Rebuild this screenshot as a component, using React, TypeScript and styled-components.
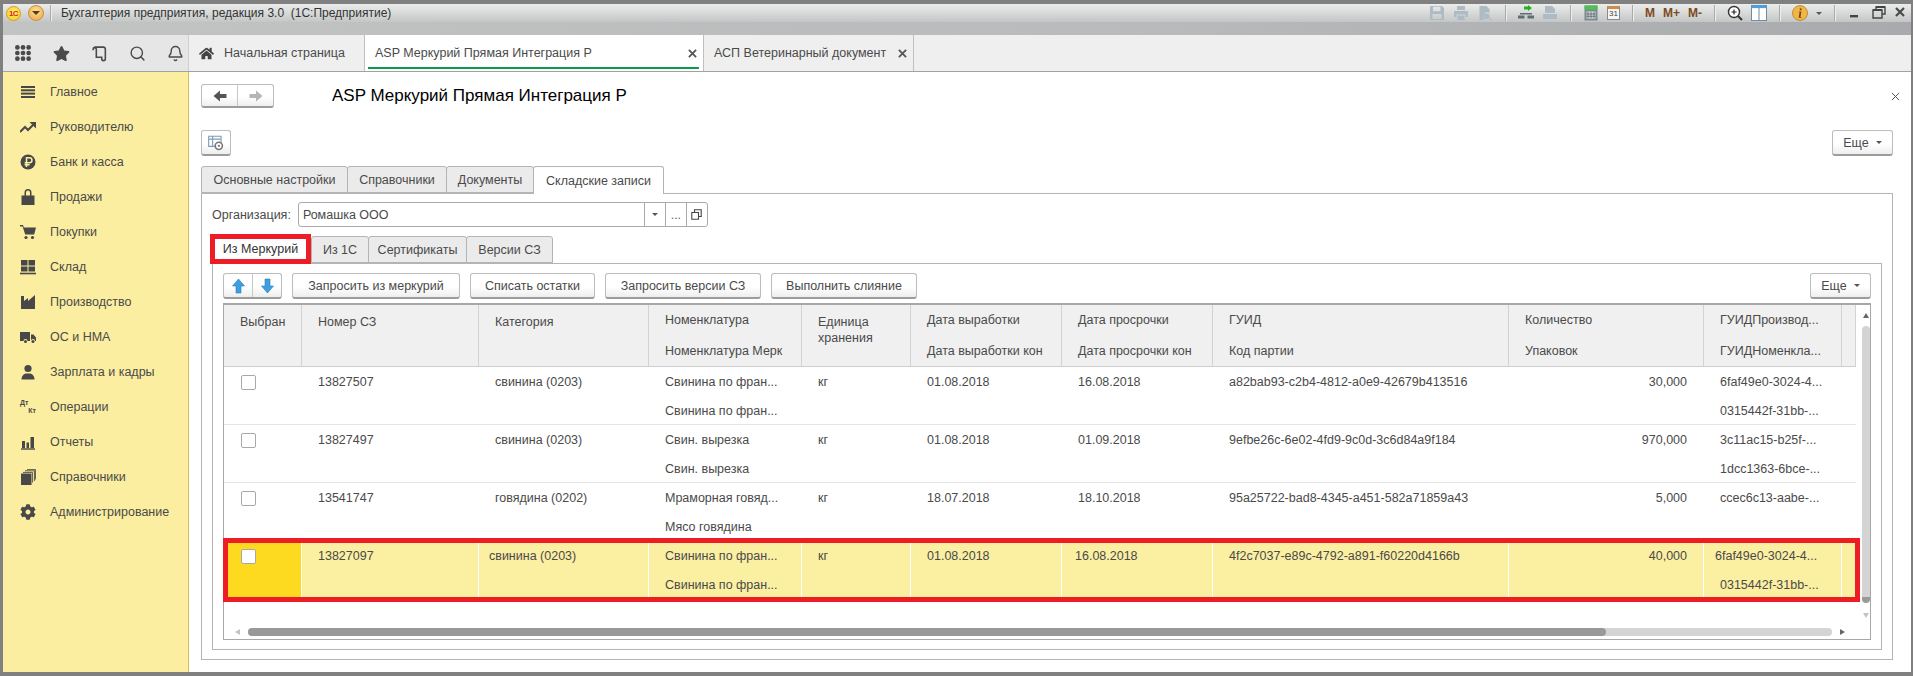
import React from 'react';
import styled, { createGlobalStyle } from 'styled-components';
import { FaCog, FaHome, FaStar } from 'react-icons/fa';
import { Bell, Search } from 'lucide-react';

const Global = createGlobalStyle`
  html, body { margin: 0; padding: 0; background: #fff; overflow: hidden; }
  body { font-family: "Liberation Sans", Arial, sans-serif; font-size: 12.5px; color: #4a4a4a; }
  * { box-sizing: border-box; }
`;

const columnTemplate = '78px 177px 170px 153px 109px 151px 151px 296px 195px 138px 14px';

const headers: [string, string?][] = [
  ['Выбран'],
  ['Номер СЗ'],
  ['Категория'],
  ['Номенклатура', 'Номенклатура Мерк'],
  ['Единица хранения'],
  ['Дата выработки', 'Дата выработки кон'],
  ['Дата просрочки', 'Дата просрочки кон'],
  ['ГУИД', 'Код партии'],
  ['Количество', 'Упаковок'],
  ['ГУИДПроизвод...', 'ГУИДНоменкла...'],
  ['', ''],
];

const rows = [
  {
    num: '13827507', cat: 'свинина (0203)', nom: ['Свинина по фран...', 'Свинина по фран...'],
    d1: '01.08.2018', d2: '16.08.2018', guid: 'a82bab93-c2b4-4812-a0e9-42679b413516', qty: '30,000',
    ext: ['6faf49e0-3024-4...', '0315442f-31bb-...'],
  },
  {
    num: '13827497', cat: 'свинина (0203)', nom: ['Свин. вырезка', 'Свин. вырезка'],
    d1: '01.08.2018', d2: '01.09.2018', guid: '9efbe26c-6e02-4fd9-9c0d-3c6d84a9f184', qty: '970,000',
    ext: ['3c11ac15-b25f-...', '1dcc1363-6bce-...'],
  },
  {
    num: '13541747', cat: 'говядина (0202)', nom: ['Мраморная говяд...', 'Мясо говядина'],
    d1: '18.07.2018', d2: '18.10.2018', guid: '95a25722-bad8-4345-a451-582a71859a43', qty: '5,000',
    ext: ['ccec6c13-aabe-...', ''],
  },
  {
    num: '13827097', cat: 'свинина (0203)', nom: ['Свинина по фран...', 'Свинина по фран...'],
    d1: '01.08.2018', d2: '16.08.2018', guid: '4f2c7037-e89c-4792-a891-f60220d4166b', qty: '40,000',
    ext: ['6faf49e0-3024-4...', '0315442f-31bb-...'],
  },
];

const Frame = styled.div`
  width: 1913px;
  height: 676px;
  display: flex;
  flex-direction: column;
  border-style: solid;
  border-color: #808080;
  border-width: 4px 2px 4px 3px;
  overflow: hidden;
`;

const TitleBar = styled.div`
  height: 18px;
  flex: none;
  display: flex;
  align-items: center;
  background: linear-gradient(#ebecec, #c4c6c6);
  padding-left: 3px;
`;

const Strip = styled.div`
  height: 13px;
  flex: none;
  background: linear-gradient(90deg, #c2c3c3, #b9babb 60%, #a9aaad);
`;

const Logo = styled.span`
  width: 15px;
  height: 15px;
  border-radius: 50%;
  background: radial-gradient(circle at 50% 40%, #fff27a, #f5c815);
  border: 1px solid #d8a010;
  color: #d8261c;
  font-size: 8px;
  font-weight: bold;
  display: flex;
  align-items: center;
  justify-content: center;
  letter-spacing: -0.5px;
`;

const MenuOrb = styled.span`
  width: 16px;
  height: 16px;
  margin-left: 7px;
  border-radius: 50%;
  background: radial-gradient(circle at 50% 35%, #fbe0a0, #eda43c);
  border: 1px solid #c9913f;
  display: flex;
  align-items: center;
  justify-content: center;
  &::after {
    content: '';
    border-style: solid;
    border-width: 4px 4px 0;
    border-color: #5c3b10 transparent transparent;
  }
`;

const TitleSep = styled.span`
  width: 1px;
  height: 16px;
  background: #a9aaaa;
  box-shadow: 1px 0 0 #eee;
  margin: 0 ${(p: { $tight?: boolean }) => (p.$tight ? '4px' : '10px')} 0 ${(p: { $tight?: boolean }) => (p.$tight ? '4px' : '6px')};
`;

const AppTitle = styled.span`
  font-size: 12px;
  color: #333;
  white-space: pre;
`;

const ToolStrip = styled.div`
  margin-left: auto;
  display: flex;
  align-items: center;
  gap: 8px;
  padding-right: 6px;
`;

const BrownMark = styled.span`
  color: #7d4a1e;
  font-size: 12px;
  font-weight: bold;
  min-width: 10px;
  white-space: nowrap;
`;

const DayMark = styled.span`
  width: 13px;
  height: 14px;
  border: 1px solid #8a8a8a;
  border-top: 3px solid #d08a4a;
  background: #f6f6f6;
  font-size: 8px;
  line-height: 10px;
  color: #444;
  text-align: center;
`;

const Caret = styled.span`
  border-style: solid;
  border-width: 3px 3px 0;
  border-color: #555 transparent transparent;
`;

const NavRow = styled.div`
  height: 37px;
  flex: none;
  display: flex;
  background: #efefef;
  border-bottom: 1px solid #a2a2a2;
`;

const QuickIcons = styled.div`
  width: 186px;
  flex: none;
  display: flex;
  align-items: center;
  gap: 21px;
  padding-left: 11px;
  background: #e6e6e6;
  color: #4a4a4a;
  border-right: 1px solid #cfcfcf;
`;

const NavTab = styled.div<{ $active?: boolean; $width: number }>`
  width: ${p => p.$width}px;
  display: flex;
  align-items: center;
  position: relative;
  padding-left: 10px;
  font-size: 12.5px;
  color: #4a4a4a;
  background: ${p => (p.$active ? '#fff' : '#efefef')};
  border-right: 1px solid #c0c0c0;
  ${p => p.$active && `box-shadow: inset 0 -4px 0 #fff;`}
`;

const GreenLine = styled.span`
  position: absolute;
  left: 3px;
  right: 4px;
  bottom: 2px;
  height: 2px;
  background: #0d9a4d;
`;

const TabClose = styled.span`
  margin-left: auto;
  margin-right: 6px;
  display: flex;
  color: #555;
`;

const HomeMark = styled.span`
  display: flex;
  margin-right: 10px;
  color: #444;
`;

const Body = styled.div`
  flex: 1;
  min-height: 0;
  display: flex;
`;

const Sidebar = styled.nav`
  width: 186px;
  flex: none;
  background: #fbeea0;
  border-right: 1px solid #d6bd55;
  padding-top: 2px;
`;

const SideItem = styled.div`
  height: 35px;
  display: flex;
  align-items: center;
  padding-left: 17px;
  gap: 14px;
  font-size: 12.5px;
  color: #4a4a4a;
`;

const SideIcon = styled.span`
  width: 16px;
  height: 16px;
  flex: none;
  display: flex;
  color: #484848;
`;

const DebitCredit = styled.span`
  width: 16px;
  height: 16px;
  flex: none;
  display: flex;
  flex-direction: column;
  font-size: 7px;
  line-height: 8px;
  font-weight: bold;
  color: #484848;
  & > span:last-child { align-self: flex-end; }
`;

const Main = styled.main`
  flex: 1;
  min-width: 0;
  background: #fff;
  padding: 12px 18px 12px 12px;
  display: flex;
  flex-direction: column;
`;

const HeadRow = styled.div`
  height: 24px;
  flex: none;
  display: flex;
  align-items: center;
`;

const PageTitle = styled.h1`
  margin: 0 0 0 58px;
  font-size: 17px;
  font-weight: normal;
  color: #000;
`;

const CloseForm = styled.span`
  margin-left: auto;
  margin-right: -7px;
  display: flex;
  color: #555;
`;

const BarRow = styled.div`
  height: 26px;
  margin-top: 22px;
  flex: none;
  display: flex;
  justify-content: space-between;
`;

const Btn = styled.div<{ $width?: number }>`
  width: ${p => (p.$width ? `${p.$width}px` : 'auto')};
  height: 100%;
  display: flex;
  align-items: center;
  justify-content: center;
  gap: 7px;
  background: linear-gradient(#fff 55%, #eeeeee);
  border: 1px solid #bcbcbc;
  border-bottom: 2px solid #9c9c9c;
  border-radius: 3px;
  font-size: 12.5px;
  color: #4a4a4a;
`;

const BtnPair = styled(Btn)`
  justify-content: flex-start;
  gap: 0;
  & > span {
    flex: 1;
    height: 100%;
    display: flex;
    align-items: center;
    justify-content: center;
  }
  & > span + span { border-left: 1px solid #c8c8c8; }
`;

const TabStrip = styled.div`
  flex: none;
  height: 27px;
  margin-top: 10px;
  display: flex;
  position: relative;
  z-index: 1;
`;

const Tab = styled.div<{ $active?: boolean; $width: number }>`
  width: ${p => p.$width}px;
  height: ${p => (p.$active ? '28px' : '27px')};
  display: flex;
  align-items: center;
  justify-content: center;
  font-size: 12.5px;
  color: #4a4a4a;
  background: ${p => (p.$active ? '#fff' : '#ebebeb')};
  border: 1px solid #b4b4b4;
  border-left-width: ${p => (p.$active ? '1px' : '1px')};
  border-bottom: ${p => (p.$active ? 'none' : '1px solid #b4b4b4')};
  border-radius: 3px 3px 0 0;
  margin-right: -1px;
`;

const OuterPanel = styled.section`
  flex: 1;
  min-height: 0;
  border: 1px solid #b4b4b4;
  display: flex;
  flex-direction: column;
  padding: 8px 10px 9px 10px;
`;

const OrgRow = styled.div`
  height: 25px;
  flex: none;
  display: flex;
  align-items: center;
  gap: 7px;
  font-size: 12.5px;
`;

const OrgField = styled.div`
  height: 100%;
  width: 410px;
  display: flex;
  border: 1px solid #aaaaaa;
  border-radius: 3px;
`;

const OrgValue = styled.span`
  flex: 1;
  padding-left: 4px;
  display: flex;
  align-items: center;
`;

const OrgBtn = styled.span`
  width: 21px;
  display: flex;
  align-items: center;
  justify-content: center;
  border-left: 1px solid #aaaaaa;
  color: #666;
`;

const SubStrip = styled.div`
  flex: none;
  height: 30px;
  margin: 7px 0 0 -2px;
  display: flex;
  align-items: flex-end;
  position: relative;
  z-index: 1;
`;

const SubTab = styled.div<{ $width: number }>`
  width: ${p => p.$width}px;
  height: 27px;
  display: flex;
  align-items: center;
  justify-content: center;
  background: #ebebeb;
  border: 1px solid #b4b4b4;
  border-radius: 3px 3px 0 0;
  margin-right: -1px;
  margin-bottom: 1px;
  font-size: 12.5px;
`;

const MarkedTab = styled.div`
  width: 101px;
  height: 30px;
  display: flex;
  align-items: center;
  justify-content: center;
  background: #fff;
  border: 5px solid #ee1c25;
  font-size: 12.5px;
  color: #333;
`;

const InnerPanel = styled.div`
  flex: 1;
  min-height: 0;
  margin-top: -1px;
  border: 1px solid #b4b4b4;
  padding: 9px 10px 9px 10px;
  display: flex;
  flex-direction: column;
`;

const CmdRow = styled.div`
  height: 26px;
  flex: none;
  display: flex;
  gap: 10px;
`;

const Grow = styled.span`
  flex: 1;
`;

const Table = styled.div`
  flex: 1;
  min-height: 0;
  margin-top: 4px;
  position: relative;
  border: 1px solid #a8a8a8;
  border-top-width: 2px;
  display: flex;
  flex-direction: column;
`;

const Upper = styled.div`
  flex: 1;
  min-height: 0;
  display: flex;
`;

const Rows = styled.div`
  width: 1632px;
  flex: none;
`;

const GridRow = styled.div<{ $head?: boolean; $picked?: boolean }>`
  display: grid;
  grid-template-columns: ${columnTemplate};
  height: ${p => (p.$head ? '62px' : '58px')};
  border-bottom: 1px solid ${p => (p.$head ? '#cfcfcf' : p.$picked ? 'transparent' : '#e4e4e4')};
  background: ${p => (p.$head ? '#f0f0f0' : p.$picked ? '#fbefa2' : '#fff')};
`;

const Col = styled.div<{ $sep?: string; $fill?: string }>`
  display: flex;
  flex-direction: column;
  min-width: 0;
  border-right: 1px solid ${p => p.$sep || 'transparent'};
  background: ${p => p.$fill || 'transparent'};
`;

const Line = styled.div<{ $sep?: string; $right?: boolean; $nudge?: number }>`
  flex: 1;
  display: flex;
  align-items: center;
  padding: 0 16px;
  padding-left: ${p => 16 + (p.$nudge || 0)}px;
  justify-content: ${p => (p.$right ? 'flex-end' : 'flex-start')};
  white-space: nowrap;
  overflow: hidden;
  color: #4a4a4a;
  & + & { border-top: 1px solid ${p => p.$sep || 'transparent'}; }
`;

const TopLine = styled(Line)`
  flex: none;
  height: 30px;
`;

const WrapHead = styled.div`
  padding: 9px 16px 0;
  line-height: 16px;
  color: #4a4a4a;
`;

const Check = styled.span`
  width: 15px;
  height: 15px;
  margin: 8px 0 0 17px;
  border: 1px solid #a8a8a8;
  border-radius: 2px;
  background: #fff;
`;

const VScroll = styled.div`
  width: 15px;
  flex: none;
  display: flex;
  flex-direction: column;
  align-items: center;
  padding: 8px 0 0 4px;
`;

const VTrack = styled.div`
  width: 8px;
  height: 277px;
  margin-top: 8px;
  background: #d4d4d4;
  border-radius: 4px;
  border-bottom: 6px solid #999;
`;

const ScrollArrow = styled.span<{ $dir: 'up' | 'down' | 'left' | 'right'; $dim?: boolean }>`
  flex: none;
  border-style: solid;
  border-color: transparent;
  border-width: 3.5px;
  ${p => {
    const c = p.$dim ? '#c4c4c4' : '#666';
    if (p.$dir === 'up') return `border-top-width:0; border-bottom: 5px solid ${c};`;
    if (p.$dir === 'down') return `border-bottom-width:0; border-top: 5px solid ${c};`;
    if (p.$dir === 'left') return `border-left-width:0; border-right: 5px solid ${c};`;
    return `border-right-width:0; border-left: 5px solid ${c};`;
  }}
`;

const VGap = styled.span`
  height: 10px;
  flex: none;
`;

const HScroll = styled.div`
  flex: none;
  height: 8px;
  margin: 0 25px 3px 11px;
  display: flex;
  align-items: center;
  gap: 8px;
`;

const HTrack = styled.div`
  flex: 1;
  height: 8px;
  border-radius: 4px;
  background: #d4d4d4;
  display: flex;
`;

const HThumb = styled.div`
  width: 1358px;
  background: #999;
  border-radius: 4px;
`;

const RedBox = styled.div`
  position: absolute;
  left: -1px;
  top: 233px;
  width: 1637px;
  height: 64px;
  border: 5px solid #ee1c25;
  pointer-events: none;
`;

const Svg = ({ children, size = 16, color = 'currentColor' }: { children: React.ReactNode; size?: number; color?: string }) => (
  <svg width={size} height={size} viewBox="0 0 16 16" fill={color}>
    {children}
  </svg>
);

const CrossIcon = ({ size = 10, weight = 2 }: { size?: number; weight?: number }) => (
  <svg width={size} height={size} viewBox="0 0 10 10" fill="none" stroke="currentColor" strokeWidth={weight}>
    <path d="M1 1l8 8M9 1l-8 8" />
  </svg>
);

const sideIcons: Record<string, React.ReactNode> = {
  menu: (
    <Svg>
      <rect x="1" y="2" width="14" height="2" />
      <rect x="1" y="5.3" width="14" height="2" />
      <rect x="1" y="8.6" width="14" height="2" />
      <rect x="1" y="12" width="14" height="2" />
    </Svg>
  ),
  trend: (
    <Svg>
      <path d="M0 13l5-5 3 3 5-5" fill="none" stroke="currentColor" strokeWidth="2" />
      <path d="M9.5 3H16v6.5z" />
    </Svg>
  ),
  ruble: (
    <Svg>
      <circle cx="8" cy="8" r="7.5" />
      <path d="M6.5 13V3.8h3a2.4 2.4 0 010 4.9H4.6M4.6 10.8h5" fill="none" stroke="#fbeea0" strokeWidth="1.5" />
    </Svg>
  ),
  bag: (
    <Svg>
      <path d="M1.5 6.5h3V3.6a3.5 3.5 0 017 0v2.9h3V16h-13zM6 6.5h4V3.6a2 2 0 00-4 0z" fillRule="evenodd" />
    </Svg>
  ),
  cart: (
    <Svg>
      <path d="M0 1h3l.8 2.5H16l-1.8 7H5.2L2.6 2.4H0z" />
      <circle cx="6" cy="13.5" r="1.6" />
      <circle cx="12.5" cy="13.5" r="1.6" />
    </Svg>
  ),
  store: (
    <Svg>
      <rect x="1" y="1" width="6.5" height="5.5" />
      <rect x="8.5" y="1" width="6.5" height="5.5" />
      <rect x="1" y="7.5" width="6.5" height="5" />
      <rect x="8.5" y="7.5" width="6.5" height="5" />
      <rect y="13.7" width="16" height="1.6" />
    </Svg>
  ),
  factory: (
    <Svg>
      <path d="M1 15V5V2h3v5l4-3v3l7-6v14z" />
    </Svg>
  ),
  truck: (
    <Svg>
      <path d="M0 3h10v9H7.5a2 2 0 00-4 0H0zM11 5.5h2.5L16 8.5V12h-1a2 2 0 00-4 0z" />
      <circle cx="5.5" cy="12.6" r="1.5" />
      <circle cx="13" cy="12.6" r="1.5" />
    </Svg>
  ),
  user: (
    <Svg>
      <circle cx="8" cy="4.5" r="3.6" />
      <path d="M1.5 15.5c0-4 2.5-5.5 4.5-6h4c2 .5 4.5 2 4.5 6z" />
    </Svg>
  ),
  bars: (
    <Svg>
      <rect x="2" y="7" width="3" height="7" />
      <rect x="6.5" y="8.5" width="2.5" height="5.5" />
      <rect x="10.5" y="3" width="3.5" height="11" />
      <rect x="1" y="14.3" width="14" height="1.4" />
    </Svg>
  ),
  books: (
    <Svg>
      <rect x="1" y="4.5" width="10.5" height="11.5" />
      <path d="M3 3.4h9.6v10.1M5 1.8h9.6v10.1M7 .4h8.4v10" fill="none" stroke="currentColor" strokeWidth=".9" />
    </Svg>
  ),
};

const sideItems: { label: string; icon?: string }[] = [
  { label: 'Главное', icon: 'menu' },
  { label: 'Руководителю', icon: 'trend' },
  { label: 'Банк и касса', icon: 'ruble' },
  { label: 'Продажи', icon: 'bag' },
  { label: 'Покупки', icon: 'cart' },
  { label: 'Склад', icon: 'store' },
  { label: 'Производство', icon: 'factory' },
  { label: 'ОС и НМА', icon: 'truck' },
  { label: 'Зарплата и кадры', icon: 'user' },
  { label: 'Операции' },
  { label: 'Отчеты', icon: 'bars' },
  { label: 'Справочники', icon: 'books' },
  { label: 'Администрирование', icon: 'gear' },
];

const dim = '#aebbc4';

const TopTools = () => (
  <ToolStrip>
    <Svg color={dim}>
      <path d="M1 1h12l2 2v12H1zM4 1.8v4.4h7.5V1.8zM3.5 9v5h9V9z" fillRule="evenodd" />
    </Svg>
    <Svg color={dim}>
      <path d="M4 1h8v4H4zM1 6h14v6h-2.5V9.5h-9V12H1zM4.5 10.5h7V15h-7z" />
    </Svg>
    <Svg color={dim}>
      <path d="M2.5 1h7l3 3v4a4 4 0 00-5.5 5.5V15H2.5zM9.5 8.5a2.8 2.8 0 102 4.6l2.4 2.4.9-.9-2.4-2.4a2.8 2.8 0 00-2.9-3.7z" fillRule="evenodd" />
    </Svg>
    <TitleSep $tight />
    <Svg>
      <path d="M6 1.5h4V0l4 3-4 3V4.6H6z" fill="#1fb31f" />
      <path d="M2 8h12v1.5H2zM0 10.5h6.5v3H0zM9.5 10.5H16v3H9.5z" fill="#5f6d75" />
    </Svg>
    <Svg color={dim}>
      <path d="M3 1h7l3 3v4H3zM1 9h14v5H1z" />
    </Svg>
    <TitleSep $tight />
    <Svg>
      <rect x="1.5" y="0.5" width="13" height="15" fill="#7c8a8d" />
      <rect x="1.5" y="0.5" width="13" height="4" fill="#4ec24e" />
      <path d="M3.5 6.5h9v7h-9z" fill="#d9dede" />
      <path d="M5 7v6M8 7v6M11 7v6M3.5 9h9M3.5 11.3h9" stroke="#66737a" />
    </Svg>
    <DayMark>31</DayMark>
    <TitleSep $tight />
    <BrownMark>M</BrownMark>
    <BrownMark>M+</BrownMark>
    <BrownMark>M-</BrownMark>
    <TitleSep $tight />
    <Svg>
      <circle cx="7" cy="7" r="5.5" fill="#fff" stroke="#333" strokeWidth="1.4" />
      <path d="M4.4 7h5.2M7 4.4v5.2" stroke="#222" strokeWidth="1.2" />
      <path d="M11 11l4 4" stroke="#333" strokeWidth="2" />
    </Svg>
    <Svg>
      <rect x="0.5" y="0.5" width="15" height="15" fill="#fff" stroke="#6e8ca5" />
      <rect x="0.5" y="0.5" width="15" height="2.6" fill="#4f9fe0" />
      <path d="M8 3v12" stroke="#6e8ca5" />
    </Svg>
    <TitleSep $tight />
    <Svg>
      <circle cx="8" cy="8" r="7.5" fill="#f0b648" stroke="#c78c2c" />
      <path d="M8.7 3.2a1 1 0 11-.01 0zM7 6.5h2.4L8.5 12h.9v.8H6.6l1-5.5h-.8z" fill="#6e4a12" />
    </Svg>
    <Caret />
    <TitleSep $tight />
    <Svg color="#444">
      <rect x="3" y="10" width="8" height="2.4" />
    </Svg>
    <Svg>
      <path d="M5 5V2h9v7h-3M2 5h9v8H2zM2 5h9" fill="none" stroke="#444" strokeWidth="1.4" />
      <path d="M5 2h9M2 5h9" stroke="#444" strokeWidth="2" />
    </Svg>
    <span>
      <CrossIcon size={10} weight={2.2} />
    </span>
  </ToolStrip>
);

const ArrowIcon = ({ dir, color }: { dir: 'left' | 'right' | 'up' | 'down'; color: string }) => {
  const rotate = { left: 0, right: 180, up: 90, down: 270 }[dir];
  return (
    <svg width="16" height="16" viewBox="0 0 16 16" fill={color} transform={`rotate(${rotate})`}>
      <path d="M1.5 8L8 2.5V6h6.5v4H8v3.5z" />
    </svg>
  );
};

const BlockArrow = ({ down }: { down?: boolean }) => (
  <svg width="13" height="16" viewBox="0 0 13 16" fill="#3f9ee2" stroke="#2a7cb8" strokeWidth=".6" transform={down ? 'rotate(180)' : undefined}>
    <path d="M6.5 1L12.5 8H9v7H4V8H.5z" />
  </svg>
);

const App = () => (
  <>
    <Global />
    <Frame>
      <TitleBar>
        <Logo>1С</Logo>
        <MenuOrb />
        <TitleSep />
        <AppTitle>{'Бухгалтерия предприятия, редакция 3.0  (1С:Предприятие)'}</AppTitle>
        <TopTools />
      </TitleBar>
      <Strip />
      <NavRow>
        <QuickIcons>
          <Svg size={18}>
            {[3, 8, 13].map(y =>
              [3, 8, 13].map(x => <circle key={`${x}-${y}`} cx={x} cy={y} r="2.1" />),
            )}
          </Svg>
          <FaStar size={17} />
          <Svg size={17}>
            <path
              d="M3 2h8.5a2 2 0 012 2v9a1.7 1.7 0 01-3.4 0v-1.5H5V4a1.5 1.5 0 00-3 0V5"
              fill="none"
              stroke="currentColor"
              strokeWidth="1.5"
            />
          </Svg>
          <Search size={17} strokeWidth={2} />
          <Bell size={17} strokeWidth={2} />
        </QuickIcons>
        <NavTab $width={176}>
          <HomeMark>
            <FaHome size={15} />
          </HomeMark>
          Начальная страница
        </NavTab>
        <NavTab $width={339} $active>
          ASP Меркурий Прямая Интеграция Р
          <TabClose>
            <CrossIcon size={9} weight={2} />
          </TabClose>
          <GreenLine />
        </NavTab>
        <NavTab $width={210}>
          АСП Ветеринарный документ
          <TabClose>
            <CrossIcon size={9} weight={2} />
          </TabClose>
        </NavTab>
      </NavRow>
      <Body>
        <Sidebar>
          {sideItems.map(item => (
            <SideItem key={item.label}>
              {item.icon === 'gear' ? (
                <SideIcon>
                  <FaCog size={16} />
                </SideIcon>
              ) : item.icon ? (
                <SideIcon>{sideIcons[item.icon]}</SideIcon>
              ) : (
                <DebitCredit>
                  <span>Дт</span>
                  <span>Кт</span>
                </DebitCredit>
              )}
              {item.label}
            </SideItem>
          ))}
        </Sidebar>
        <Main>
          <HeadRow>
            <BtnPair $width={73}>
              <span>
                <ArrowIcon dir="left" color="#555" />
              </span>
              <span>
                <ArrowIcon dir="right" color="#b5b5b5" />
              </span>
            </BtnPair>
            <PageTitle>ASP Меркурий Прямая Интеграция Р</PageTitle>
            <CloseForm>
              <CrossIcon size={9} weight={1.1} />
            </CloseForm>
          </HeadRow>
          <BarRow>
            <Btn $width={30}>
              <Svg size={18} color="none">
                <path d="M1.5 2h11v9h-11zM1.5 4.5h11M5 2v9" stroke="#7f9db5" />
                <circle cx="10.5" cy="10.5" r="3.2" fill="#fff" stroke="#777" strokeWidth="1.4" />
                <circle cx="10.5" cy="10.5" r="1" fill="#777" />
              </Svg>
            </Btn>
            <Btn $width={61}>
              Еще
              <Caret />
            </Btn>
          </BarRow>
          <TabStrip>
            <Tab $width={147}>Основные настройки</Tab>
            <Tab $width={100}>Справочники</Tab>
            <Tab $width={88}>Документы</Tab>
            <Tab $width={131} $active>
              Складские записи
            </Tab>
          </TabStrip>
          <OuterPanel>
            <OrgRow>
              Организация:
              <OrgField>
                <OrgValue>Ромашка ООО</OrgValue>
                <OrgBtn>
                  <Caret />
                </OrgBtn>
                <OrgBtn>...</OrgBtn>
                <OrgBtn>
                  <svg width="11" height="11" viewBox="0 0 11 11" fill="none" stroke="#444" strokeWidth="1.1">
                    <path d="M3.5 3.5V.8h6.7v6.7H7.5M.8 3.5h6.7v6.7H.8z" />
                  </svg>
                </OrgBtn>
              </OrgField>
            </OrgRow>
            <SubStrip>
              <MarkedTab>Из Меркурий</MarkedTab>
              <SubTab $width={58}>Из 1С</SubTab>
              <SubTab $width={99}>Сертификаты</SubTab>
              <SubTab $width={87}>Версии СЗ</SubTab>
            </SubStrip>
            <InnerPanel>
              <CmdRow>
                <BtnPair $width={59}>
                  <span>
                    <BlockArrow />
                  </span>
                  <span>
                    <BlockArrow down />
                  </span>
                </BtnPair>
                <Btn $width={168}>Запросить из меркурий</Btn>
                <Btn $width={125}>Списать остатки</Btn>
                <Btn $width={156}>Запросить версии СЗ</Btn>
                <Btn $width={146}>Выполнить слияние</Btn>
                <Grow />
                <Btn $width={61}>
                  Еще
                  <Caret />
                </Btn>
              </CmdRow>
              <Table>
                <Upper>
                  <Rows>
                    <GridRow $head>
                      {headers.map(([top, bottom], i) => (
                        <Col key={i} $sep="#d2d2d2">
                          {i === 4 ? (
                            <WrapHead>{top}</WrapHead>
                          ) : bottom !== undefined ? (
                            <>
                              <TopLine $sep="#d2d2d2">{top}</TopLine>
                              <Line $sep="#d2d2d2">{bottom}</Line>
                            </>
                          ) : (
                            <WrapHead>{top}</WrapHead>
                          )}
                        </Col>
                      ))}
                    </GridRow>
                    {rows.map((r, i) => {
                      const picked = i === 3;
                      const sep = picked ? '#ffffff' : undefined;
                      return (
                        <GridRow key={r.num} $picked={picked}>
                          <Col $sep={sep} $fill={picked ? '#fdda20' : undefined}>
                            <Check />
                          </Col>
                          <Col $sep={sep}>
                            <TopLine>{r.num}</TopLine>
                          </Col>
                          <Col $sep={sep}>
                            <TopLine $nudge={picked ? -6 : 0}>{r.cat}</TopLine>
                          </Col>
                          <Col $sep={sep}>
                            <TopLine $sep={sep}>{r.nom[0]}</TopLine>
                            <Line $sep={sep}>{r.nom[1]}</Line>
                          </Col>
                          <Col $sep={sep}>
                            <TopLine>кг</TopLine>
                          </Col>
                          <Col $sep={sep}>
                            <TopLine>{r.d1}</TopLine>
                            <Line $sep={sep} />
                          </Col>
                          <Col $sep={sep}>
                            <TopLine $nudge={picked ? -3 : 0}>{r.d2}</TopLine>
                            <Line $sep={sep} />
                          </Col>
                          <Col $sep={sep}>
                            <TopLine>{r.guid}</TopLine>
                            <Line $sep={sep} />
                          </Col>
                          <Col $sep={sep}>
                            <TopLine $right>{r.qty}</TopLine>
                            <Line $sep={sep} />
                          </Col>
                          <Col $sep={sep}>
                            <TopLine $nudge={picked ? -5 : 0}>{r.ext[0]}</TopLine>
                            <Line $sep={sep}>{r.ext[1]}</Line>
                          </Col>
                          <Col>
                            <TopLine />
                            <Line $sep={sep} />
                          </Col>
                        </GridRow>
                      );
                    })}
                  </Rows>
                  <VScroll>
                    <ScrollArrow $dir="up" />
                    <VTrack />
                    <VGap />
                    <ScrollArrow $dir="down" $dim />
                  </VScroll>
                </Upper>
                <HScroll>
                  <ScrollArrow $dir="left" $dim />
                  <HTrack>
                    <HThumb />
                  </HTrack>
                  <ScrollArrow $dir="right" />
                </HScroll>
                <RedBox />
              </Table>
            </InnerPanel>
          </OuterPanel>
        </Main>
      </Body>
    </Frame>
  </>
);

export default App;
